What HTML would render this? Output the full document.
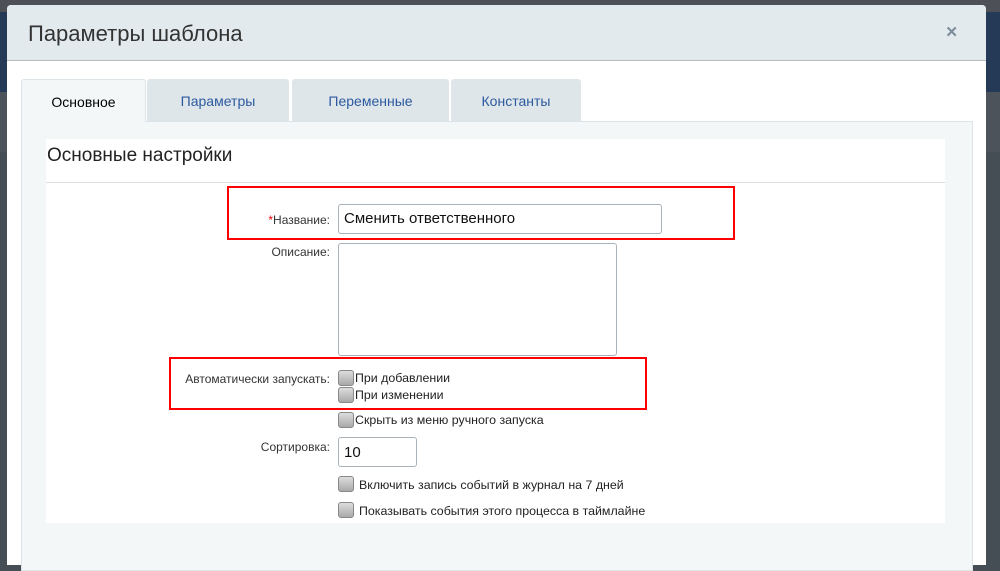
<!DOCTYPE html>
<html><head><meta charset="utf-8"><style>
*{box-sizing:border-box;margin:0;padding:0}
body{width:1000px;height:553px;overflow:hidden;background:#454d55;font-family:"Liberation Sans",sans-serif;position:relative}
.bg1{position:absolute;left:0;top:0;width:1000px;height:12px;background:#4d5157}
.bg2{position:absolute;left:0;top:12px;width:1000px;height:80px;background:#253a57}
.bg3{position:absolute;left:0;top:92px;width:1000px;height:60px;background:#4c535b}
.dlg{position:absolute;left:7px;top:5px;width:979px;height:560px;background:#fff;border-radius:4px 4px 0 0}
.hdr{height:56px;background:#e2eaed;border-bottom:1px solid #b8bcbf;border-radius:4px 4px 0 0;position:relative}
.hdr h1{position:absolute;left:21px;top:16px;font-weight:normal;font-size:22px;color:#333}
.x{position:absolute;right:28px;top:18px;font-size:15px;color:#7d8b99;font-weight:bold}
.tab{position:absolute;top:74px;height:42px;background:#dfe6e9;border-radius:3px 3px 0 0;font-size:14px;color:#2c5aa0;text-align:center;line-height:44px}
.tab.a{background:#f4f7f8;color:#000;border:1px solid #dde4e8;border-bottom:none;height:43px;z-index:2}
.panel{position:absolute;left:14px;top:116px;width:952px;height:450px;background:#f4f7f8;border:1px solid #dde4e8}
.inner{position:absolute;left:24px;top:17px;width:899px;height:384px;background:#fff}
.inner h2{font-weight:normal;font-size:19px;color:#222;padding:6px 0 0 1px;height:44px;border-bottom:1px solid #dcdfe1}
.lbl{position:absolute;font-size:12px;color:#333;text-align:right;width:280px}
.inp{position:absolute;border:1px solid #a9b2b8;border-radius:3px;background:#fff;font-size:15px;color:#111;padding-left:5px}
.cb{position:absolute;width:16px;height:16px;border:1px solid #888;border-radius:3px;background:linear-gradient(#ddd,#a9a9a9)}
.ct{position:absolute;font-size:12.4px;color:#222}
.red{position:absolute;border:2px solid #f00}
</style></head><body>
<div class="bg1"></div><div class="bg2"></div><div class="bg3"></div>
<div class="dlg">
<div class="hdr"><h1>Параметры шаблона</h1><div class="x">✕</div></div>
<div class="tab a" style="left:14px;width:125px">Основное</div>
<div class="tab" style="left:140px;width:142px">Параметры</div>
<div class="tab" style="left:285px;width:157px">Переменные</div>
<div class="tab" style="left:444px;width:130px">Константы</div>
<div class="panel"><div class="inner"><h2>Основные настройки</h2></div></div>
</div>
<div class="lbl" style="left:50px;top:213px"><span style="color:#e00">*</span>Название:</div>
<div class="inp" style="left:338px;top:204px;width:324px;height:30px;line-height:28px">Сменить ответственного</div>
<div class="lbl" style="left:50px;top:245px">Описание:</div>
<div class="inp" style="left:338px;top:243px;width:279px;height:113px"></div>
<div class="lbl" style="left:50px;top:372px">Автоматически запускать:</div>
<div class="cb" style="left:338px;top:370px"></div><div class="ct" style="left:355px;top:371px">При добавлении</div>
<div class="cb" style="left:338px;top:387px"></div><div class="ct" style="left:355px;top:388px">При изменении</div>
<div class="cb" style="left:338px;top:412px"></div><div class="ct" style="left:355px;top:413px">Скрыть из меню ручного запуска</div>
<div class="lbl" style="left:50px;top:440px">Сортировка:</div>
<div class="inp" style="left:338px;top:437px;width:79px;height:30px;line-height:30px">10</div>
<div class="cb" style="left:338px;top:476px"></div><div class="ct" style="left:359px;top:478px">Включить запись событий в журнал на 7 дней</div>
<div class="cb" style="left:338px;top:502px"></div><div class="ct" style="left:359px;top:504px">Показывать события этого процесса в таймлайне</div>
<div class="red" style="left:227px;top:186px;width:508px;height:54px"></div>
<div class="red" style="left:169px;top:357px;width:478px;height:53px"></div>
</body></html>
